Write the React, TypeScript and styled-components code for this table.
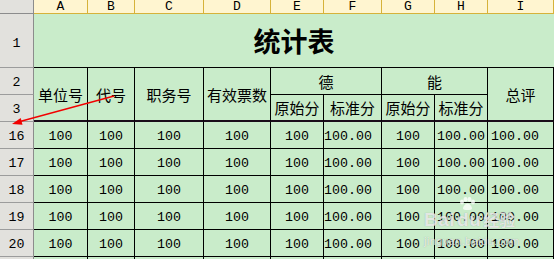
import styled, { createGlobalStyle } from "styled-components"

const GlobalStyle = createGlobalStyle`
  html, body {
    margin: 0;
    padding: 0;
    background: #c9ecca;
    overflow: hidden;
  }
`

const Sheet = styled.div`
  position: relative;
  width: 554px;
  height: 259px;
  overflow: hidden;
  display: grid;
  grid-template-columns: 34px 54px 47px 69px 67px 53px 58px 53px 53px 66px;
  grid-template-rows: 14px 54px 27px 27px repeat(5, 27px) 20px;
  background: #c9ecca;
  color: #000;
`

const Corner = styled.div`
  background: #e2e1dd;
  border-right: 1px solid #8c8c8c;
  border-bottom: 1px solid #8c8c8c;
`

const ColHead = styled.div`
  background: #fff5d0;
  border-right: 1px solid #d6b23a;
  border-bottom: 1px solid #d6b23a;
  display: flex;
  align-items: center;
  justify-content: center;
  font-family: "Liberation Mono", monospace;
  font-size: 13px;
  line-height: 13px;
`

const RowHead = styled.div<{ $top?: number }>`
  background: #e2e1dd;
  border-right: 1px solid #8c8c8c;
  border-bottom: 1px solid #9c9c9c;
  display: flex;
  align-items: center;
  justify-content: center;
  padding-top: ${p => p.$top ?? 2}px;
  font-family: "Liberation Mono", monospace;
  font-size: 13.3px;
`

const Title = styled.div`
  grid-column: span 9;
  border-bottom: 1px solid #000;
  display: flex;
  align-items: center;
  justify-content: center;
  font-family: "Noto Sans CJK SC", sans-serif;
  font-size: 27px;
  font-weight: 700;
`

const Head = styled.div<{ $cols?: number; $rows?: number; $thick?: boolean }>`
  grid-column: span ${p => p.$cols ?? 1};
  grid-row: span ${p => p.$rows ?? 1};
  border-right: 1px solid #000;
  border-bottom: ${p => (p.$thick ? "2px solid #1a0d1a" : "1px solid #000")};
  display: flex;
  align-items: center;
  justify-content: center;
  white-space: nowrap;
  font-family: "Noto Sans CJK SC", sans-serif;
  font-size: 15px;
`

const Cell = styled.div<{ $pad?: number }>`
  border-right: 1px solid #000;
  border-bottom: 1px solid #000;
  display: flex;
  align-items: center;
  justify-content: ${p => (p.$pad === undefined ? "center" : "flex-start")};
  padding: 2px 0 0 ${p => p.$pad ?? 0}px;
  white-space: nowrap;
  overflow: hidden;
  font-family: "Liberation Mono", monospace;
  font-size: 13.3px;
`

const Arrow = styled.svg`
  position: absolute;
  left: 0;
  top: 0;
  pointer-events: none;
`

const Watermark = styled.div`
  position: absolute;
  left: 424px;
  top: 198px;
  display: flex;
  flex-direction: column;
  gap: 8px;
  color: rgba(255, 255, 255, 0.72);
  text-shadow: 0 0 1px rgba(110, 110, 110, 0.55);
  pointer-events: none;
`

const LogoRow = styled.div`
  display: flex;
  align-items: flex-end;
  padding-top: 14px;
  font-family: "Liberation Sans", sans-serif;
  font-weight: 700;
  font-size: 19px;
  line-height: 15px;
  letter-spacing: 0.5px;
`

const Du = styled.span`
  position: relative;
  margin-left: 2px;
`

const Paw = styled.svg`
  position: absolute;
  left: 1px;
  top: -15px;
`

const Jingyan = styled.span`
  margin-left: 2px;
  font-family: "Noto Sans CJK SC", sans-serif;
  font-size: 16px;
  letter-spacing: 0;
`

const Url = styled.div`
  font-family: "Liberation Sans", sans-serif;
  font-size: 11px;
  letter-spacing: 0.4px;
`

const letters = ["A", "B", "C", "D", "E", "F", "G", "H", "I"]
const dataRows = [16, 17, 18, 19, 20]
const rowCells: { text: string; pad?: number }[] = [
  { text: "100" },
  { text: "100" },
  { text: "100" },
  { text: "100" },
  { text: "100" },
  { text: "100.00", pad: 0 },
  { text: "100" },
  { text: "100.00", pad: 2 },
  { text: "100.00", pad: 3 },
]

export default function App() {
  return (
    <>
      <GlobalStyle />
      <Sheet>
        <Corner />
        {letters.map(l => (
          <ColHead key={l}>{l}</ColHead>
        ))}

        <RowHead $top={5}>1</RowHead>
        <Title>统计表</Title>

        <RowHead>2</RowHead>
        <Head $rows={2} $thick>单位号</Head>
        <Head $rows={2} $thick>代号</Head>
        <Head $rows={2} $thick>职务号</Head>
        <Head $rows={2} $thick>有效票数</Head>
        <Head $cols={2}>德</Head>
        <Head $cols={2}>能</Head>
        <Head $rows={2} $thick>总评</Head>

        <RowHead>3</RowHead>
        <Head $thick>原始分</Head>
        <Head $thick>标准分</Head>
        <Head $thick>原始分</Head>
        <Head $thick>标准分</Head>

        {dataRows.map(r => [
          <RowHead key={`h${r}`}>{r}</RowHead>,
          ...rowCells.map((c, i) => (
            <Cell key={`${r}-${i}`} $pad={c.pad}>
              {c.text}
            </Cell>
          )),
        ])}

        {/* row 21 is only a sliver at the bottom edge */}
        <RowHead />
        {rowCells.map((_, i) => (
          <Cell key={`tail-${i}`} />
        ))}

        <Arrow width="554" height="259" viewBox="0 0 554 259">
          <line x1="114" y1="96" x2="20" y2="121.5" stroke="#f20000" strokeWidth="1.3" />
          <polygon points="12,124 22.5,124.7 20.7,118" fill="#f20000" />
        </Arrow>

        <Watermark>
          <LogoRow>
            <span>Bai</span>
            <Du>
              <Paw width="18" height="14" viewBox="0 0 18 14">
                <ellipse cx="4" cy="5" rx="2" ry="2.4" fill="rgba(255,255,255,0.75)" />
                <ellipse cx="7.5" cy="2.4" rx="2" ry="2.3" fill="rgba(255,255,255,0.75)" />
                <ellipse cx="11.5" cy="2.4" rx="2" ry="2.3" fill="rgba(255,255,255,0.75)" />
                <ellipse cx="15" cy="5" rx="2" ry="2.4" fill="rgba(255,255,255,0.75)" />
                <path d="M9.5 6.5 C7 6.5 5 10 5 11.5 C5 13.5 14 13.5 14 11.5 C14 10 12 6.5 9.5 6.5 Z" fill="rgba(255,255,255,0.75)" />
              </Paw>
              du
            </Du>
            <Jingyan>经验</Jingyan>
          </LogoRow>
          <Url>jingyan.baidu.com</Url>
        </Watermark>
      </Sheet>
    </>
  )
}
